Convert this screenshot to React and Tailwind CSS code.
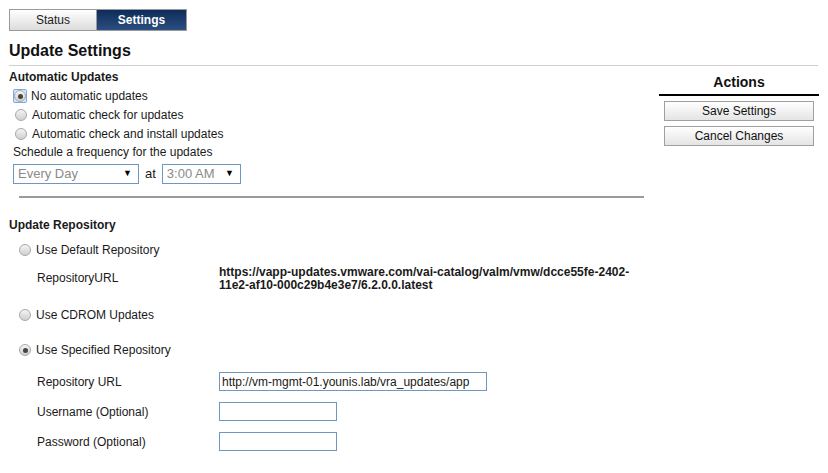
import React from 'react';

const font = { fontFamily: '"Liberation Sans", Arial, sans-serif' };

function Radio({ checked, focused }) {
    return (
        <span
            className={`inline-flex items-center justify-center w-[14px] h-[14px] shrink-0 ${focused ? 'border border-[#7aa7e6] bg-[#dbe8fa] rounded-[2px]' : ''}`}
        >
            <span className="w-[12px] h-[12px] rounded-full border border-[#a8a8a8] bg-gradient-to-b from-[#f4f4f4] to-[#d0d0d0] flex items-center justify-center">
                {checked && <span className="w-[5px] h-[5px] rounded-full bg-[#444]" />}
            </span>
        </span>
    );
}

function Select({ value, width }) {
    return (
        <div className={`${width} h-[20px] border border-[#6f97c4] bg-white flex items-center justify-between pl-[4px] pr-[6px]`}>
            <span className="text-[#8a8a8a] text-[13px]">{value}</span>
            <span className="text-[9px] text-black">▼</span>
        </div>
    );
}

function ActionButton({ children }) {
    return (
        <button className="w-[150px] h-[20px] border border-[#a0a0a0] bg-gradient-to-b from-white to-[#e4e4e4] text-[12px] text-[#111] leading-none">
            {children}
        </button>
    );
}

export default function App() {
    return (
        <div className="w-[828px] h-[473px] bg-white text-[#1a1a1a] text-[12px] overflow-hidden" style={font}>
            {/* Tabs */}
            <div className="pt-[9px] pl-[9px]">
                <div className="flex w-[178px] h-[22px] border border-[#9a9a9a]">
                    <div className="w-[87px] flex items-center justify-center bg-gradient-to-b from-white to-[#dcdcdc] text-[12px] text-[#222] border-r border-[#9a9a9a]">
                        Status
                    </div>
                    <div className="flex-1 flex items-center justify-center bg-gradient-to-b from-[#0e2c5a] to-[#2b4f80] text-white font-bold text-[12px]">
                        Settings
                    </div>
                </div>
            </div>

            {/* Title */}
            <div className="pl-[9px] pr-[10px]">
                <h1 className="text-[16px] font-bold leading-[19px] mt-[10px] text-[#111]">Update Settings</h1>
                <div className="mt-[5px] h-px bg-[#cfcfcf]" />
            </div>

            <div className="flex">
                {/* Left column */}
                <div className="w-[650px] pl-[9px]">
                    <div className="font-bold mt-[4px] leading-[14px]">Automatic Updates</div>
                    <div className="pl-[4px] mt-[5px] flex flex-col gap-[5px]">
                        <label className="flex items-center gap-[4px] h-[14px]">
                            <Radio checked focused />
                            <span>No automatic updates</span>
                        </label>
                        <label className="flex items-center gap-[4px] h-[14px] pl-px">
                            <Radio />
                            <span>Automatic check for updates</span>
                        </label>
                        <label className="flex items-center gap-[4px] h-[14px] pl-px">
                            <Radio />
                            <span>Automatic check and install updates</span>
                        </label>
                    </div>
                    <div className="pl-[4px] mt-[4px] leading-[14px]">Schedule a frequency for the updates</div>
                    <div className="pl-[4px] mt-[5px] flex items-center gap-[6px]">
                        <Select value="Every Day" width="w-[126px]" />
                        <span className="text-[13px]">at</span>
                        <Select value="3:00 AM" width="w-[79px]" />
                    </div>
                    <div className="ml-[10px] mr-[6px] mt-[12px] h-[2px] bg-[#9a9a9a]" />

                    <div className="font-bold mt-[20px] leading-[14px]">Update Repository</div>

                    <div className="pl-[9px] mt-[11px]">
                        <label className="flex items-center gap-[4px] h-[14px]">
                            <Radio />
                            <span>Use Default Repository</span>
                        </label>
                        <div className="flex items-center mt-[9px]">
                            <span className="w-[201px] pl-[19px] -mt-[3px]">RepositoryURL</span>
                            <span className="font-bold w-[420px] leading-[13px]">
                                https://vapp-updates.vmware.com/vai-catalog/valm/vmw/dcce55fe-2402-11e2-af10-000c29b4e3e7/6.2.0.0.latest
                            </span>
                        </div>
                        <label className="flex items-center gap-[4px] h-[14px] mt-[16px]">
                            <Radio />
                            <span>Use CDROM Updates</span>
                        </label>
                        <label className="flex items-center gap-[4px] h-[14px] mt-[21px]">
                            <Radio checked />
                            <span>Use Specified Repository</span>
                        </label>

                        <div className="flex flex-col gap-[11px] mt-[15px]">
                            <div className="flex items-center">
                                <span className="w-[201px] pl-[19px]">Repository URL</span>
                                <div className="w-[268px] h-[19px] border border-[#6f97c4] flex items-center px-[2px] text-[12px]">
                                    http://vm-mgmt-01.younis.lab/vra_updates/app
                                </div>
                            </div>
                            <div className="flex items-center">
                                <span className="w-[201px] pl-[19px]">Username (Optional)</span>
                                <div className="w-[118px] h-[19px] border border-[#6f97c4]" />
                            </div>
                            <div className="flex items-center">
                                <span className="w-[201px] pl-[19px]">Password (Optional)</span>
                                <div className="w-[118px] h-[19px] border border-[#6f97c4]" />
                            </div>
                        </div>
                    </div>
                </div>

                {/* Right column */}
                <div className="ml-[9px] w-[160px]">
                    <div className="text-[14px] font-bold text-center mt-[8px] leading-[16px] text-[#111]">Actions</div>
                    <div className="mt-[4px] h-[2px] bg-black" />
                    <div className="flex flex-col items-center gap-[5px] mt-[5px]">
                        <ActionButton>Save Settings</ActionButton>
                        <ActionButton>Cancel Changes</ActionButton>
                    </div>
                </div>
            </div>
        </div>
    );
}
